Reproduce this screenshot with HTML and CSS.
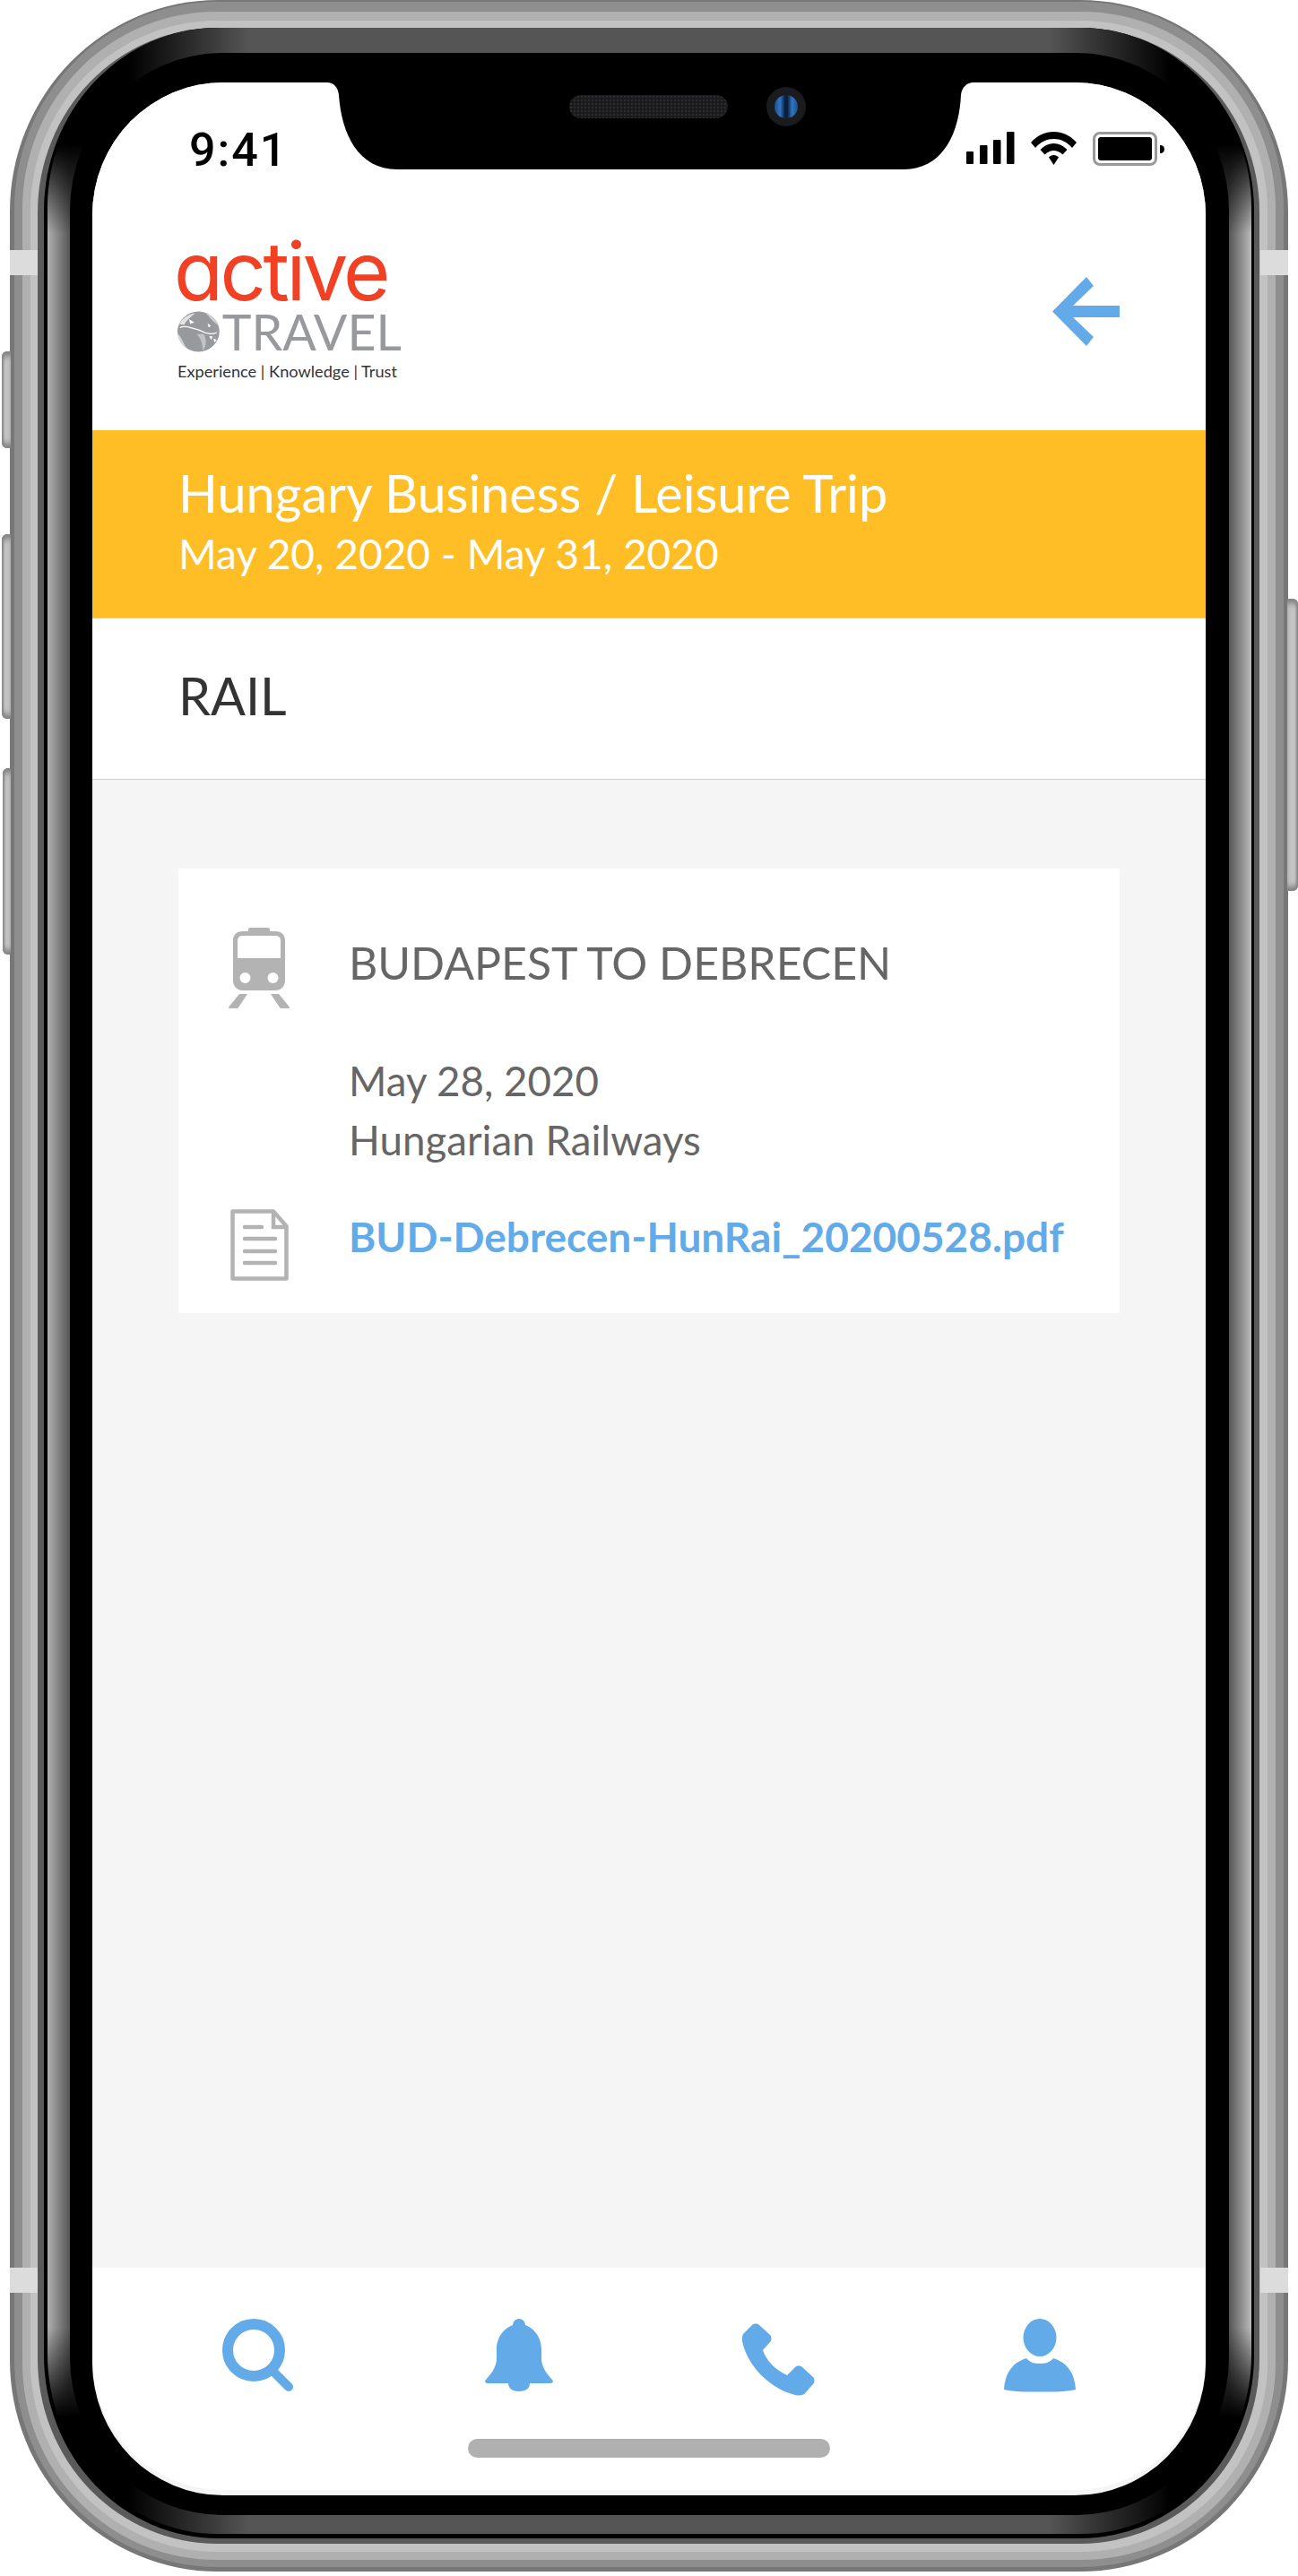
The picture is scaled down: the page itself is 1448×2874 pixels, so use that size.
FILE: index.html
```html
<!DOCTYPE html>
<html lang="en">
<head>
<meta charset="UTF-8">
<title>Active Travel - Rail</title>
<link rel="stylesheet" href="styles.css">
</head>
<body>
<div class="phone">
  <!-- side buttons and antenna lines -->
  <span class="side-btn btn-mute"></span>
  <span class="side-btn btn-up"></span>
  <span class="side-btn btn-down"></span>
  <span class="side-btn btn-power"></span>
  <span class="antenna ant-tl"></span>
  <span class="antenna ant-tr"></span>
  <span class="antenna ant-bl"></span>
  <span class="antenna ant-br"></span>

  <div class="ring ring-2"><div class="ring ring-3"><div class="ring ring-4"><div class="ring ring-5">
  <div class="ring ring-6"><div class="ring ring-glass"><div class="ring ring-black">

    <div class="screen">
      <svg class="notch" viewBox="0 0 734 100" width="734" height="100">
        <path d="M0 0C7 0 12 5 13 14C16 58 35 97 78 97H643C686 97 705 58 707 14C708 5 714 0 721 0Z" fill="#000"/>
      </svg>
      <span class="speaker"></span>
      <span class="camera"><i></i></span>

      <header class="top">
        <div class="status">
          <span class="time">9:41</span>
          <div class="status-icons">
            <svg width="54" height="36" viewBox="0 0 54 36" fill="#000">
              <rect x="0" y="22" width="8" height="14" rx="1"/>
              <rect x="15" y="15" width="8.500" height="21" rx="1"/>
              <rect x="30" y="9" width="8.500" height="27" rx="1"/>
              <rect x="45" y="0" width="8.500" height="36" rx="1"/>
            </svg>
            <svg class="wifi" width="51" height="37" viewBox="0 0 51 37" fill="#000">
              <path d="M25.500 0C35 0 44 4 51 12L46 18C40 11 33 8 25.500 8S11 11 5 18L0 12C7 4 16 0 25.500 0Z"/>
              <path d="M25.500 13C31 13 36 15.500 40.500 20L35.500 25.500C32.500 22.500 29 21 25.500 21S18.500 22.500 15.500 25.500L10.500 20C15 15.500 20 13 25.500 13Z"/>
              <path d="M25.500 26C27.800 26 29.500 27 31 28.500L25.500 37L20 28.500C21.500 27 23.200 26 25.500 26Z"/>
            </svg>
            <div class="battery"><span></span></div>
            <span class="battery-cap"></span>
          </div>
        </div>

        <div class="brand-row">
          <div class="logo">
            <div class="logo-active">active</div>
            <div class="logo-travel">
              <svg width="50" height="48" viewBox="0 0 50 48">
                <defs><clipPath id="ball"><ellipse cx="25" cy="24" rx="25" ry="24"/></clipPath></defs>
                <ellipse cx="25" cy="24" rx="25" ry="24" fill="#97999c"/>
                <g clip-path="url(#ball)">
                  <path d="M0 26C5 30 7 40 14 48H0Z" fill="#d5d6d7"/>
                  <path d="M2 15C6 8 13 3 21 2C15 7 11 10 8 16Z" fill="#e4e4e5"/>
                  <path d="M33 1C40 3 46 9 49 17L41 10Z" fill="#d0d1d2"/>
                  <path d="M23 27C27 31 30 37 30 47C35 42 35 32 31 27Z" fill="#c2c3c5"/>
                  <path d="M3 19C10 16 16 20 22 21C28 22 32 26 36 26C38 26 41 28 47 25" fill="none" stroke="#fff" stroke-width="1.300"/>
                  <path d="M14 9L20 13L15 15Z" fill="#fff"/>
                  <path d="M38 29L42 30L40 34ZM43 32L47 34L44 37ZM36 14L40 17L37 19Z" fill="#fff"/>
                </g>
              </svg>
              <span>TRAVEL</span>
            </div>
            <div class="logo-tag">Experience | Knowledge | Trust</div>
          </div>
          <a class="back" href="#">
            <svg width="75" height="77" viewBox="0 0 75 77" fill="#63abe8">
              <path d="M0 38.500L38 0L46 10L23 32H75V45H23L46 67L38 77Z"/>
            </svg>
          </a>
        </div>
      </header>

      <section class="trip">
        <h1>Hungary Business / Leisure Trip</h1>
        <p>May 20, 2020 - May 31, 2020</p>
      </section>

      <div class="section-title">RAIL</div>

      <main class="content">
        <article class="card">
          <svg class="train" width="68" height="90" viewBox="0 0 68 90" fill="#b3b3b3">
            <rect x="22" y="0" width="24" height="6" rx="2"/>
            <path fill-rule="evenodd" d="M16 4H52C59 4 63 8 63 14V59C63 65 59 70 52 70H16C9 70 5 65 5 59V14C5 8 9 4 16 4ZM16 9C12 9 10 11 10 15V34H58V15C58 11 56 9 52 9Z"/>
            <circle cx="18.500" cy="56" r="6" fill="#fff"/>
            <circle cx="49.500" cy="56" r="6" fill="#fff"/>
            <path d="M12 74H21L11 89C10.500 90 9 90 8 90H1C0 90 -.3 89 .5 88Z"/>
            <path d="M47 74H56L67.500 88C68.300 89 68 90 67 90H60C59 90 57.500 90 57 89Z"/>
          </svg>
          <h2>BUDAPEST TO DEBRECEN</h2>
          <div class="details">
            <div>May 28, 2020</div>
            <div>Hungarian Railways</div>
          </div>
          <svg class="doc" width="65" height="80" viewBox="0 0 65 80" fill="none" stroke="#b3b3b3">
            <path stroke-width="4.500" stroke-linejoin="round" d="M2.500 2.500H48L62.500 19V77.500H2.500Z"/>
            <path stroke-width="4.500" d="M48 2.500V20H62.500"/>
            <g stroke-width="4.500" stroke-linecap="round">
              <line x1="16" y1="20" x2="35" y2="20"/>
              <line x1="16" y1="33" x2="50" y2="33"/>
              <line x1="16" y1="47" x2="50" y2="47"/>
              <line x1="16" y1="60" x2="50" y2="60"/>
            </g>
          </svg>
          <a class="file" href="#">BUD-Debrecen-HunRai_20200528.pdf</a>
        </article>
      </main>

      <nav class="tabs">
        <a href="#">
          <svg width="82" height="86" viewBox="0 0 82 86" fill="none" stroke="#63abe8">
            <circle cx="36" cy="35" r="29" stroke-width="12"/>
            <line x1="59" y1="60" x2="75" y2="76" stroke-width="10" stroke-linecap="round"/>
          </svg>
        </a>
        <a href="#">
          <svg width="76" height="86" viewBox="0 0 76 86" fill="#63abe8">
            <circle cx="38" cy="7" r="7"/>
            <path d="M38 6C52 6 63 19 63 34V44C63 55 70 62 75 68C77 70 75.500 72 73 72H3C.5 72 -1 70 1 68C6 62 13 55 13 44V34C13 19 24 6 38 6Z"/>
            <path d="M26 70H50V72C50 78 45 81 38 81S26 78 26 72Z"/>
          </svg>
        </a>
        <a href="#">
          <svg width="82" height="86" viewBox="0 -5 82 86" fill="#63abe8">
            <path d="M1 12L11 2C13 0 17 0 19 2L31 13C33 15 33 19 31 21L23 30C27 42 37 52 50 58L59 49C61 47 65 47 67 49L79 60C81 62 81 66 79 68L71 77C68 81 64 81 59 80C28 72 5 45 0 20C-.5 17 0 14 1 12Z"/>
          </svg>
        </a>
        <a href="#">
          <svg width="80" height="86" viewBox="0 0 80 86" fill="#63abe8">
            <ellipse cx="40" cy="21" rx="18.500" ry="21"/>
            <path d="M25 44C29 49 34 50 40 50S51 49 55 44C71 49 79 61 80 79C68 82 54 81.500 40 81.500S12 82 0 79C1 61 9 49 25 44Z"/>
          </svg>
        </a>
      </nav>
      <span class="home-bar"></span>
    </div>

  </div></div></div></div></div></div></div>
</div>
</body>
</html>
```

FILE: styles.css
```css
* {
  box-sizing: border-box;
}
html, body {
  margin: 0;
  padding: 0;
  background: #fff;
}
body {
  width: 1448px;
  height: 2874px;
  overflow: hidden;
  font-family: "Lato", "Liberation Sans", sans-serif;
}
a {
  text-decoration: none;
}

/* phone body: nested rings, outside to inside */
.phone {
  position: relative;
  margin-left: 11px;
  width: 1426px;
  height: 2869px;
  padding: 2px 5px 5px;
  background: #777;
  border-radius: 232px / 236px;
}
.ring {
  width: 100%;
  height: 100%;
}
.ring-2 {
  padding: 11px 9px 8px;
  background: #8e8e8e;
  border-radius: 226px / 232px;
}
.ring-3 {
  padding: 10px 9px 9px;
  background: #b0b0b0;
  border-radius: 216px / 220px;
}
.ring-4 {
  padding: 8px 9px 9px 8px;
  background: #c2c2c2;
  border-radius: 208px / 212px;
}
.ring-5 {
  padding: 0 6px 6px 7px;
  background: #5a5a5a;
  border-radius: 200px / 206px;
}
.ring-6 {
  padding: 0 3px 5px 4px;
  background: #000;
  border-radius: 194px / 204px;
}
.ring-glass {
  padding: 28px 25px 21px;
  border-radius: 190px / 200px;
  background:
    linear-gradient(90deg, #000 90px, #555 225px, #555 calc(100% - 225px), #000 calc(100% - 90px)) top / 100% 130px no-repeat,
    linear-gradient(90deg, #000 90px, #555 225px, #555 calc(100% - 225px), #000 calc(100% - 90px)) bottom / 100% 130px no-repeat,
    linear-gradient(180deg, #000 130px, rgba(0,0,0,0) 230px, rgba(0,0,0,0) calc(100% - 230px), #000 calc(100% - 130px)),
    linear-gradient(90deg, #b0b0b0 0, #555 25px, #555 calc(100% - 25px), #bbb 100%);
}
.ring-black {
  padding: 33px 26px 22px 25px;
  background: #000;
  border-radius: 170px / 176px;
}

.side-btn {
  position: absolute;
  left: -9px;
  width: 10px;
  background: #c4c4c4;
  border-radius: 6px 0 0 6px;
  box-shadow: inset 2px 0 2px #8a8a8a, inset 0 8px 6px -3px #808080, inset 0 -8px 6px -3px #808080;
}
.btn-mute { top: 392px; height: 108px; }
.btn-up { top: 596px; height: 206px; }
.btn-down { top: 857px; height: 208px; left: -8px; width: 9px; }
.btn-power {
  left: auto;
  right: -11px;
  top: 668px;
  width: 12px;
  height: 326px;
  border-radius: 0 6px 6px 0;
  box-shadow: inset -2px 0 2px #8a8a8a, inset 0 8px 6px -3px #808080, inset 0 -8px 6px -3px #808080;
}
.antenna {
  position: absolute;
  width: 31px;
  height: 28px;
  background: #dcdcdc;
}
.ant-tl { left: 0; top: 279px; }
.ant-tr { right: 0; top: 279px; }
.ant-bl { left: 0; top: 2530px; }
.ant-br { right: 0; top: 2530px; }

/* the screen */
.screen {
  position: relative;
  width: 100%;
  height: 100%;
  display: flex;
  flex-direction: column;
  overflow: hidden;
  background: #f5f5f5;
  border-radius: 146px / 148px;
}
.notch {
  position: absolute;
  left: 262px;
  top: 0;
  display: block;
}
.speaker {
  position: absolute;
  left: 532px;
  top: 14px;
  width: 177px;
  height: 26px;
  border-radius: 13px;
  background: #1b1b1d radial-gradient(#2d2d30 1px, transparent 1.2px) 0 0 / 4px 4px;
}
.camera {
  position: absolute;
  left: 752px;
  top: 5px;
  width: 44px;
  height: 44px;
  border-radius: 50%;
  background: #1a1b1e;
  display: flex;
  align-items: center;
  justify-content: center;
}
.camera i {
  width: 26px;
  height: 26px;
  border-radius: 50%;
  background: linear-gradient(90deg, #1d4f8e 0, #2f76c2 24%, #0c1f3a 45%, #0c1f3a 55%, #2f76c2 76%, #1d4f8e 100%);
}

.top {
  height: 388px;
  background: #fff;
  flex: none;
}
.status {
  height: 178px;
  padding: 55px 46px 0 108px;
  display: flex;
  justify-content: space-between;
  align-items: flex-start;
}
.time {
  font-family: "Roboto", "Liberation Sans", sans-serif;
  font-weight: 500;
  font-size: 52px;
  line-height: 42px;
  color: #000;
  letter-spacing: 2px;
}
.status-icons {
  display: flex;
  align-items: flex-start;
}
.wifi {
  margin-left: 18px;
}
.battery {
  margin-left: 18px;
  width: 72px;
  height: 38px;
  padding: 3px;
  border: 3px solid #999;
  border-radius: 8px;
}
.battery span {
  display: block;
  width: 100%;
  height: 100%;
  background: #000;
  border-radius: 3px;
}
.battery-cap {
  margin: 15px 0 0 3px;
  width: 5px;
  height: 9px;
  background: #000;
  border-radius: 0 5px 5px 0;
}
.brand-row {
  display: flex;
  justify-content: space-between;
  align-items: flex-start;
  padding: 0 96px 0 95px;
}
.logo {
  width: 250px;
}
.logo-active {
  margin-left: -4px;
  font-family: "Inter", "Lato", sans-serif;
  font-feature-settings: "cv11";
  font-size: 90px;
  line-height: 66px;
  letter-spacing: -3.5px;
  color: #f04125;
  height: 76px;
  white-space: nowrap;
}
.logo-travel {
  display: flex;
  align-items: center;
  height: 48px;
  color: #97999c;
  font-size: 55.500px;
  line-height: 48px;
}
.logo-travel span {
  margin-left: 3px;
}
.logo-tag {
  margin-top: 10px;
  font-size: 18.200px;
  line-height: 20px;
  color: #333;
  white-space: nowrap;
}
.back {
  display: block;
  margin-top: 39px;
  line-height: 0;
}

.trip {
  flex: none;
  height: 210px;
  padding: 37px 96px 0;
  background: #ffbe26;
  border-bottom: 1px solid #ccc;
  color: #fff;
}
.trip h1 {
  margin: 0;
  font-size: 57.500px;
  font-weight: 400;
  line-height: 66px;
}
.trip p {
  margin: 8px 0 0;
  font-size: 46px;
  line-height: 54px;
}
.section-title {
  flex: none;
  height: 180px;
  padding-left: 96px;
  background: #fff;
  border-bottom: 1px solid #ccc;
  font-size: 57.500px;
  line-height: 172px;
  color: #333;
}

.content {
  flex: 1;
  padding: 99px 96px 0;
}
.card {
  height: 496px;
  background: #fff;
  display: grid;
  grid-template-columns: 190px 1fr;
  grid-template-rows: 90px auto auto;
  padding-top: 66px;
}
.train {
  justify-self: center;
  margin-right: 10px;
}
.card h2 {
  margin: 9px 0 0;
  align-self: start;
  font-size: 50px;
  font-weight: 400;
  line-height: 60px;
  color: #666;
}
.details {
  grid-column: 2;
  padding-top: 48px;
  font-size: 45.700px;
  line-height: 66px;
  color: #666;
}
.doc {
  grid-column: 1;
  justify-self: center;
  margin: 8px 10px 0 0;
}
.file {
  margin-top: 11px;
  font-size: 46px;
  font-weight: 700;
  line-height: 56px;
  color: #63abe8;
}

.tabs {
  flex: none;
  height: 248px;
  margin-bottom: 6px;
  padding: 57px 40px 0;
  display: grid;
  grid-template-columns: repeat(4, 1fr);
  justify-items: center;
  align-items: start;
  background: #fff;
  border-radius: 0 0 146px 146px;
}
.tabs a {
  display: block;
  line-height: 0;
}
.home-bar {
  position: absolute;
  left: 419px;
  top: 2629px;
  width: 404px;
  height: 21px;
  background: #b0b0b0;
  border-radius: 11px;
}
```
